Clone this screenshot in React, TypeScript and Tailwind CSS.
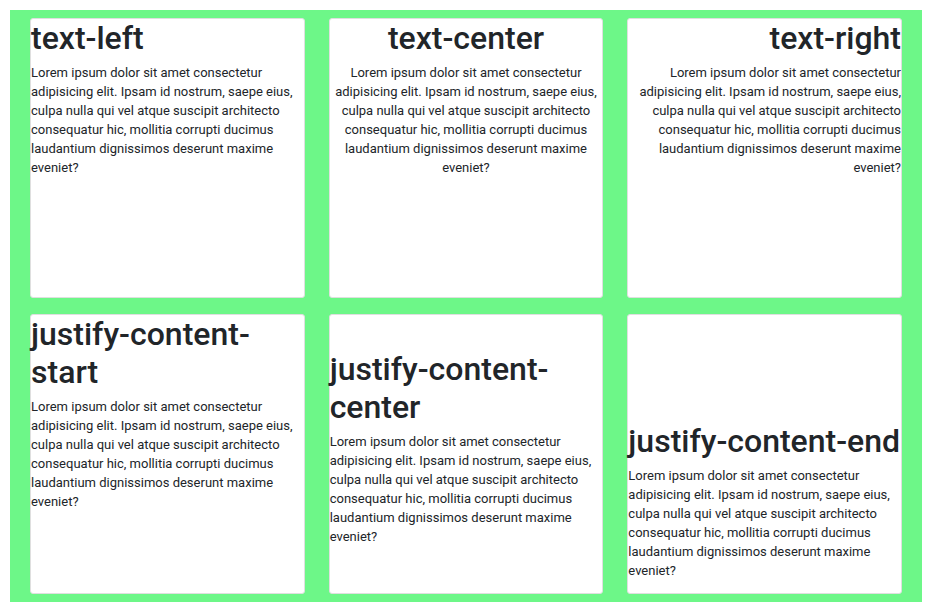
type Cell = { title: string; className: string };

const LOREM =
  "Lorem ipsum dolor sit amet consectetur adipisicing elit. Ipsam id nostrum, saepe eius, culpa nulla qui vel atque suscipit architecto consequatur hic, mollitia corrupti ducimus laudantium dignissimos deserunt maxime eveniet?";

const cells: Cell[] = [
  { title: "text-left", className: "text-left" },
  { title: "text-center", className: "text-center" },
  { title: "text-right", className: "text-right" },
  { title: "justify-content-start", className: "justify-start" },
  { title: "justify-content-center", className: "justify-center" },
  { title: "justify-content-end", className: "justify-end" },
];

function Card({ title, className }: Cell) {
  return (
    <article
      className={`flex h-[280px] min-w-0 flex-col rounded-[3px] border border-[#dfdfdf] bg-white ${className}`}
    >
      <h2 className="mb-1.5 text-[32px] leading-[38px] font-medium">{title}</h2>
      <p className="mb-[13px] text-[13px] leading-[19px]">{LOREM}</p>
    </article>
  );
}

export default function App() {
  return (
    <main className="bg-white py-2.5 pr-[9px] pl-2.5 font-['Roboto','Liberation_Sans',sans-serif] text-[#212529]">
      <div className="grid grid-cols-3 gap-x-6 gap-y-4 bg-[#6df788] px-5 py-2">
        {cells.map((cell) => (
          <Card key={cell.title} {...cell} />
        ))}
      </div>
    </main>
  );
}
